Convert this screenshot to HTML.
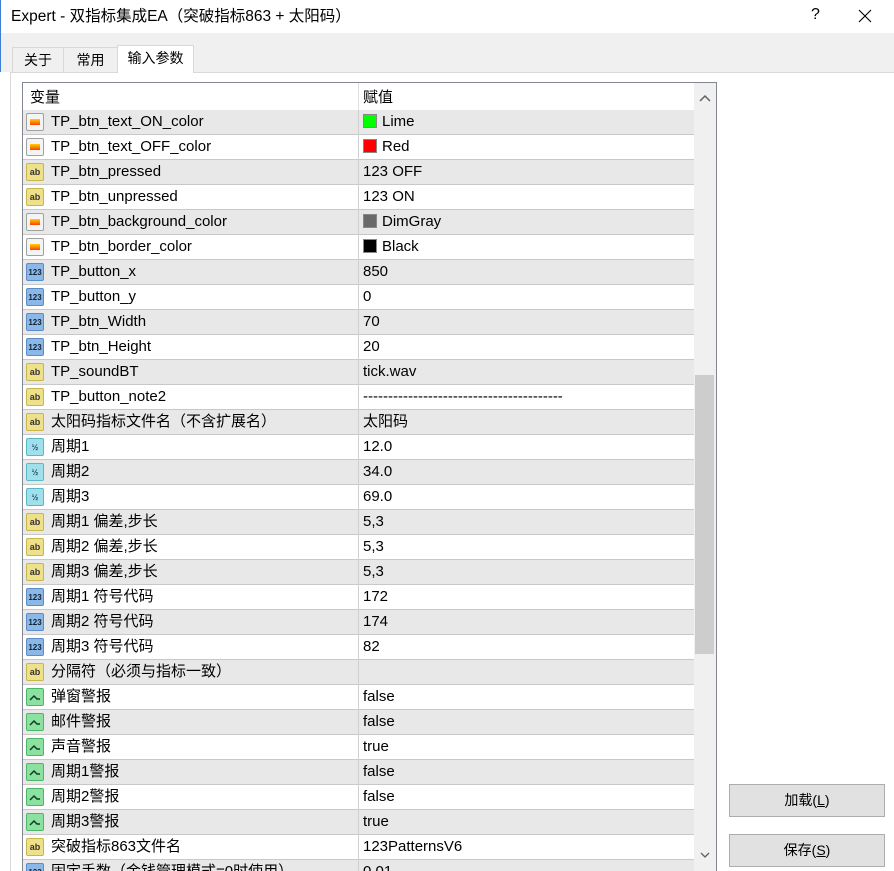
<!DOCTYPE html>
<html><head><meta charset="utf-8"><style>
*{margin:0;padding:0;box-sizing:border-box}
body{width:894px;height:871px;overflow:hidden;background:#fff;font-family:"Liberation Sans","Noto Sans CJK SC",sans-serif;font-size:15px;color:#000;position:relative}
.abs{position:absolute}
#title{left:0;top:0;width:894px;height:33px;background:#fff;border-left:1px solid #3c7fd6}
#title span{position:absolute;left:10px;top:0;line-height:33px;font-size:15.5px}
#grey{left:0;top:33px;width:894px;height:39px;background:#f0f0f0;border-left:1px solid #3c7fd6}
.tab{top:47px;height:25px;background:#f0f0f0;border:1px solid #d9d9d9;border-bottom:none;font-size:14px;line-height:24px;text-align:center}
#panel{left:10px;top:72px;width:884px;height:799px;background:#fff;border-left:1px solid #d9d9d9;border-top:1px solid #d9d9d9}
#list{left:22px;top:82px;width:695px;height:789px;border:1px solid #828790;border-bottom:none;background:#fff;overflow:hidden}
.row{position:absolute;left:0;width:671px;height:25px;border-bottom:1px solid #c8c8c8}
.g{background:#e8e8e8}
.row .n{position:absolute;left:28px;top:0;line-height:24px;height:24px;white-space:nowrap}
.row .v{position:absolute;left:340px;top:0;line-height:24px;height:24px;white-space:nowrap}
.row .d{position:absolute;left:335px;top:0;width:1px;height:25px;background:#d0d0d0}
.ic{position:absolute;left:3px;top:3px;width:18px;height:18px;border-radius:2px;font-size:9px;font-weight:bold;text-align:center;line-height:17px}
.ab{background:#efe08a;border:1px solid #c8b64a;color:#333}
.n123{background:#8cb8e8;border:1px solid #5a8cc8;color:#123;font-size:8px}
.half{background:#9fe0ea;border:1px solid #5ab8c8;color:#246;font-size:8px}
.bool{background:#8ce0a0;border:1px solid #4ab864}
.col{background:#f4f4f4;border:1px solid #a0a0a0}
.col i{position:absolute;left:3px;top:5px;width:10px;height:6px;background:linear-gradient(#ffd000,#ff4000)}
.sw{display:inline-block;width:14px;height:14px;border:1px solid #888;vertical-align:-2px;margin-right:5px}
#sb{left:671px;top:0;width:22px;height:789px;background:#f0f0f0}
#thumb{left:672px;top:292px;width:19px;height:279px;background:#cdcdcd}
.btn{left:729px;width:156px;height:33px;background:#e1e1e1;border:1px solid #adadad;text-align:center;font-size:14px;line-height:31px}
</style></head><body>
<div id="title" class="abs"><span>Expert - 双指标集成EA（突破指标863 + 太阳码）</span>
<div class="abs" style="left:810px;top:6px;font-size:16px">?</div>
<svg class="abs" style="left:856px;top:8px" width="16" height="16"><path d="M2 2 L14 14 M14 2 L2 14" stroke="#000" stroke-width="1.1"/></svg></div>
<div id="grey" class="abs"></div>
<div class="tab abs" style="left:12px;width:52px">关于</div>
<div class="tab abs" style="left:63px;width:55px">常用</div>
<div id="panel" class="abs"></div>
<div class="tab abs" style="left:117px;top:45px;width:77px;height:28px;background:#fff;border-color:#d9d9d9">输入参数</div>
<div id="list" class="abs">
<div class="abs" style="left:7px;top:3px;line-height:24px">变量</div>
<div class="abs" style="left:340px;top:3px;line-height:24px">赋值</div>
<div class="abs" style="left:335px;top:0;width:1px;height:27px;background:#e0e0e0"></div>
<div id="rows"></div>
<div id="sb" class="abs"><svg width="22" height="22" style="position:absolute;left:0;top:6px"><path d="M6 12 L11 7 L16 12" stroke="#606060" stroke-width="1.5" fill="none"/></svg>
<svg width="22" height="22" style="position:absolute;left:0;top:762px"><path d="M7 8 L11 12 L15 8" stroke="#606060" stroke-width="1.3" fill="none"/></svg></div>
<div id="thumb" class="abs"></div>
</div>
<div class="btn abs" style="top:784px">加载(<u>L</u>)</div>
<div class="btn abs" style="top:834px">保存(<u>S</u>)</div>
<script>
var R=[
["c","TP_btn_text_ON_color",'<span class="sw" style="background:#00ff00"></span>Lime'],
["c","TP_btn_text_OFF_color",'<span class="sw" style="background:#ff0000"></span>Red'],
["a","TP_btn_pressed","123 OFF"],
["a","TP_btn_unpressed","123 ON"],
["c","TP_btn_background_color",'<span class="sw" style="background:#696969"></span>DimGray'],
["c","TP_btn_border_color",'<span class="sw" style="background:#000"></span>Black'],
["n","TP_button_x","850"],["n","TP_button_y","0"],["n","TP_btn_Width","70"],["n","TP_btn_Height","20"],
["a","TP_soundBT","tick.wav"],["a","TP_button_note2","----------------------------------------"],
["a","太阳码指标文件名（不含扩展名）","太阳码"],
["h","周期1","12.0"],["h","周期2","34.0"],["h","周期3","69.0"],
["a","周期1 偏差,步长","5,3"],["a","周期2 偏差,步长","5,3"],["a","周期3 偏差,步长","5,3"],
["n","周期1 符号代码","172"],["n","周期2 符号代码","174"],["n","周期3 符号代码","82"],
["a","分隔符（必须与指标一致）",""],
["b","弹窗警报","false"],["b","邮件警报","false"],["b","声音警报","true"],
["b","周期1警报","false"],["b","周期2警报","false"],["b","周期3警报","true"],
["a","突破指标863文件名","123PatternsV6"],["n","固定手数（金钱管理模式=0时使用）","0.01"]];
var h="";
R.forEach(function(r,i){
var ic={c:'<div class="ic col"><i></i></div>',a:'<div class="ic ab">ab</div>',n:'<div class="ic n123">123</div>',h:'<div class="ic half">½</div>',b:'<div class="ic bool"><svg width="16" height="16" style="position:absolute;left:0;top:0"><path d="M3 11 L7 7 L10 10 L13 10" stroke="#0a4020" stroke-width="1.5" fill="none"/></svg></div>'}[r[0]];
h+='<div class="row'+(i%2==0?' g':'')+'" style="top:'+(27+i*25)+'px">'+ic+'<span class="n">'+r[1]+'</span><div class="d"></div><span class="v">'+r[2]+'</span></div>';
});
document.getElementById("rows").innerHTML=h;
</script>
</body></html>
